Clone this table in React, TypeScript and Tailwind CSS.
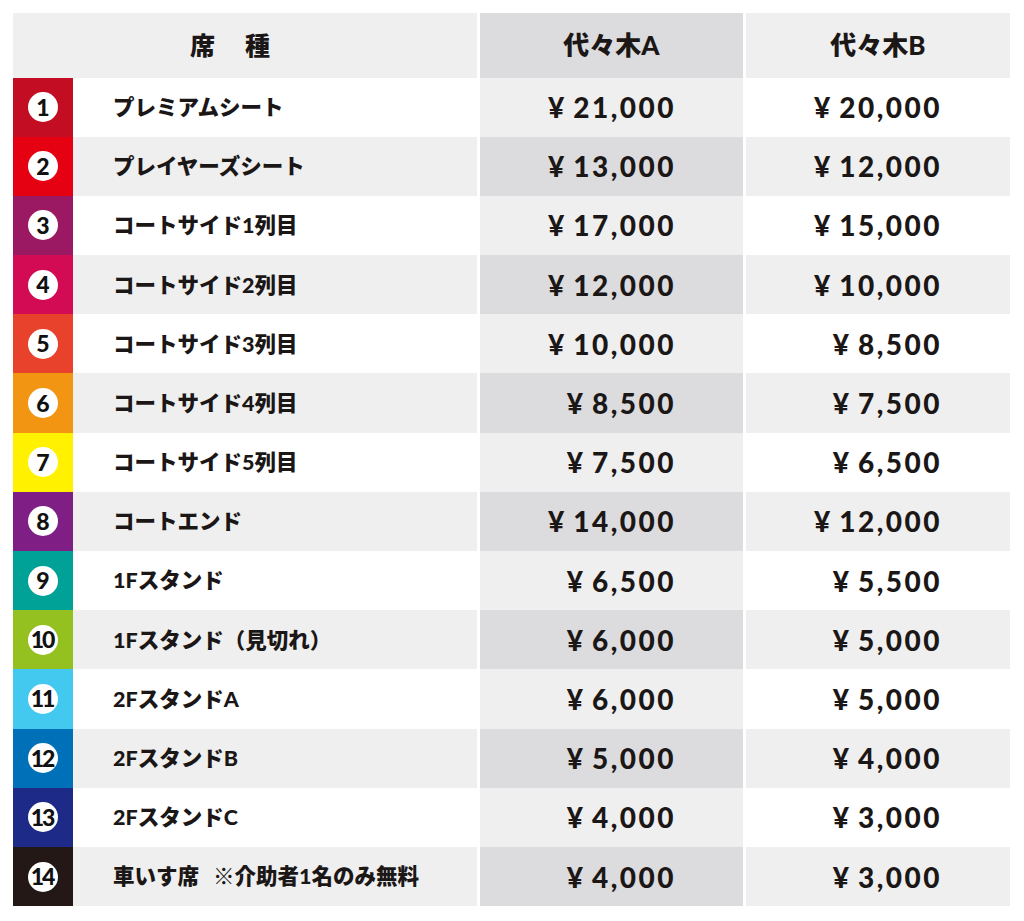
import React from 'react';

const rows = [
  { no: 1, name: 'プレミアムシート', a: '21,000', b: '20,000', color: 'bg-[#c30d23]' },
  { no: 2, name: 'プレイヤーズシート', a: '13,000', b: '12,000', color: 'bg-[#e50012]' },
  { no: 3, name: 'コートサイド1列目', a: '17,000', b: '15,000', color: 'bg-[#9b1862]' },
  { no: 4, name: 'コートサイド2列目', a: '12,000', b: '10,000', color: 'bg-[#d30a54]' },
  { no: 5, name: 'コートサイド3列目', a: '10,000', b: '8,500', color: 'bg-[#e8412c]' },
  { no: 6, name: 'コートサイド4列目', a: '8,500', b: '7,500', color: 'bg-[#f19512]' },
  { no: 7, name: 'コートサイド5列目', a: '7,500', b: '6,500', color: 'bg-[#fff100]' },
  { no: 8, name: 'コートエンド', a: '14,000', b: '12,000', color: 'bg-[#7f1f86]' },
  { no: 9, name: '1Fスタンド', a: '6,500', b: '5,500', color: 'bg-[#00a197]' },
  { no: 10, name: '1Fスタンド（見切れ）', a: '6,000', b: '5,000', color: 'bg-[#94c11f]' },
  { no: 11, name: '2FスタンドA', a: '6,000', b: '5,000', color: 'bg-[#43c8f0]' },
  { no: 12, name: '2FスタンドB', a: '5,000', b: '4,000', color: 'bg-[#0070b8]' },
  { no: 13, name: '2FスタンドC', a: '4,000', b: '3,000', color: 'bg-[#1d2a88]' },
  { no: 14, name: '車いす席', note: '※介助者1名のみ無料', a: '4,000', b: '3,000', color: 'bg-[#231815]' },
];

const Price = ({ value }: { value: string }) => (
  <span className="flex items-center">
    <span className="mr-[9px]">¥</span>
    <span className="tracking-[2.5px]">{value}</span>
  </span>
);

export default function App() {
  return (
    <div className="min-h-[921px] bg-white pt-[13px] pl-[13px] font-['Lato','Noto_Sans_CJK_JP',sans-serif] text-[#1c1717]">
      <div className="grid w-[997px] grid-cols-[60px_401px_263px_264px] gap-x-[3px]">
        {/* header */}
        <div className="col-span-2 flex h-[64.5px] items-center bg-[#efefef] pl-[177px] text-[25px] font-black">
          席<span className="inline-block w-[30px]" />種
        </div>
        <div className="flex h-[64.5px] items-center justify-center bg-[#dcdcde] text-[26px] font-black">代々木A</div>
        <div className="flex h-[64.5px] items-center justify-center bg-[#efefef] text-[26px] font-black">代々木B</div>

        {rows.map((r) => {
          const even = r.no % 2 === 0;
          return (
            <React.Fragment key={r.no}>
              <div className={`flex h-[59.2px] items-center justify-center ${r.color}`}>
                <span className="flex h-[30px] w-[30px] items-center justify-center rounded-full bg-white text-[23px] font-black leading-none tracking-[-2px] text-[#111]">
                  <span className="-ml-[2px]">{r.no}</span>
                </span>
              </div>
              <div className={`-ml-[3px] flex h-[59.2px] items-center pl-[40px] text-[21.5px] font-black ${even ? 'bg-[#efefef]' : 'bg-white'}`}>
                {r.name}
                {r.note && <span className="ml-[14px]">{r.note}</span>}
              </div>
              <div className={`flex h-[59.2px] items-center justify-end pr-[67px] text-[28px] font-black ${even ? 'bg-[#dcdcde]' : 'bg-[#efefef]'}`}>
                <Price value={r.a} />
              </div>
              <div className={`flex h-[59.2px] items-center justify-end pr-[68px] text-[28px] font-black ${even ? 'bg-[#efefef]' : 'bg-white'}`}>
                <Price value={r.b} />
              </div>
            </React.Fragment>
          );
        })}
      </div>
    </div>
  );
}
